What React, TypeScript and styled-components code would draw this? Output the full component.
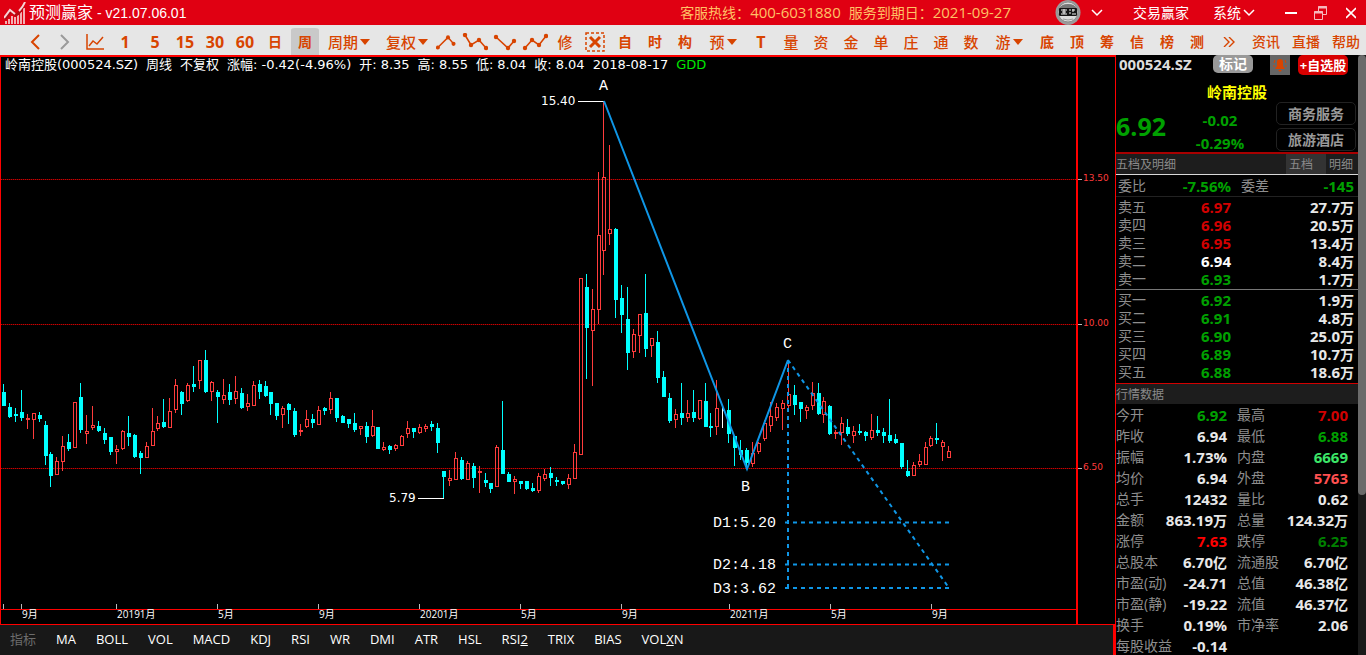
import React from "react";
import styled, { createGlobalStyle, css } from "styled-components";

const sans = '"Open Sans", "Noto Sans CJK SC", sans-serif';
const verdana = '"DejaVu Sans", "Noto Sans CJK SC", sans-serif';
const mono = '"Liberation Mono", monospace';

const c = {
  brand: "#e00012",
  orange: "#d84400",
  line: "#ff0000",
  up: "#ff3c3c",
  down: "#00ffff",
  wave: "#0f96e6",
  green: "#00a000",
  darkGreen: "#008000",
  lime: "#3ce668",
  red: "#d20000",
  hot: "#ff0000",
  coral: "#ff5050",
  value: "#e8e8e8",
  label: "#8e8e8e",
};

const Global = createGlobalStyle`
  * { box-sizing: border-box; }
  body { margin: 0; background: #000; overflow: hidden; font-family: ${sans}; }
  button { margin: 0; padding: 0; border: 0; background: none; color: inherit; font: inherit; cursor: pointer; white-space: nowrap; }
  h1, h2, p { margin: 0; font: inherit; }
`;

const Page = styled.div`
  display: flex;
  flex-direction: column;
  height: 100vh;
`;

/* ---------- title bar ---------- */
const TitleBar = styled.header`
  display: flex;
  align-items: center;
  flex: none;
  height: 25px;
  padding: 0 10px 0 4px;
  background: ${c.brand};
  color: #fff;
  font-size: 14px;
  line-height: 24px;
`;
const AppTitle = styled.h1`
  flex: 1;
  margin-left: 2px;
  font: 14px/24px "Liberation Sans", "Noto Sans CJK SC", sans-serif;
  white-space: nowrap;
`;
const AppName = styled.span`
  font-size: 16px;
`;
const Service = styled.p`
  display: flex;
  gap: 8px;
  margin-right: 44px;
  color: #ffc266;
  white-space: nowrap;
`;
const Digits = styled.span`
  font-size: 15px;
`;
const Account = styled.button`
  display: flex;
  align-items: center;
  gap: 10px;
  height: 25px;
  margin-right: 30px;
`;
const TitleButton = styled.button<{ $after?: number }>`
  display: flex;
  align-items: center;
  gap: 2px;
  height: 25px;
  margin-right: ${(p) => p.$after ?? 0}px;
`;

/* ---------- toolbar ---------- */
const Toolbar = styled.nav`
  display: flex;
  flex: none;
  height: 30px;
  padding-left: 20px;
  background: #e6e6e6;
  color: ${c.orange};
`;
const Tool = styled.button<{ $w?: number; $bold?: boolean; $active?: boolean; $muted?: boolean }>`
  display: flex;
  align-items: center;
  justify-content: center;
  flex: none;
  gap: 2px;
  width: ${(p) => p.$w ?? 30}px;
  height: 30px;
  padding-top: 4px;
  font-size: 15px;
  line-height: 24px;
  font-weight: 500;
  ${(p) => p.$muted && "color: #9a9a9a;"}
  ${(p) => p.$bold && "font-size: 14px; font-weight: 700;"}
  ${(p) =>
    p.$active &&
    css`
      background: #c9c9c9;
      background-clip: content-box;
      padding: 3px 1px 0;
      border-radius: 5px 5px 0 0;
    `}
`;
const ToolDigits = styled.span`
  font-size: 16px;
`;
const Links = styled.div`
  display: flex;
  margin-left: auto;
`;

/* ---------- main area ---------- */
const Main = styled.main`
  display: grid;
  grid-template-columns: minmax(0, 1fr) 251px;
  flex: 1;
  min-height: 0;
`;
const ChartColumn = styled.section`
  display: flex;
  flex-direction: column;
  min-height: 0;
`;
const ChartFrame = styled.div`
  position: relative;
  flex: 1;
  min-height: 0;
  border: solid ${c.line};
  border-width: 2px 0 1px 1px;
  background: #000;
`;
const ChartSvg = styled.svg`
  display: block;
  width: 100%;
  height: 100%;
`;
const Legend = styled.div`
  position: absolute;
  top: 0;
  left: 4px;
  display: flex;
  gap: 8px;
  color: #fff;
  font: 13px/16px ${verdana};
  white-space: nowrap;
`;
const LegendItem = styled.span<{ $lime?: boolean }>`
  display: flex;
  gap: 4px;
  ${(p) => p.$lime && "color: #00e600;"}
`;
const IndicatorBar = styled.nav`
  display: flex;
  align-items: center;
  flex: none;
  gap: 20px;
  height: 30px;
  padding: 0 0 2px 10px;
  border-right: 2px solid ${c.line};
  background: #181818;
  color: #fff;
  font-size: 13px;
  line-height: 28px;
`;
const IndicatorTitle = styled.span`
  width: 26px;
  color: #6c6c6c;
`;

/* ---------- quote panel ---------- */
const Side = styled.aside`
  display: flex;
  min-height: 0;
  border-left: 1px solid ${c.line};
`;
const Quote = styled.div`
  flex: 1;
  min-width: 0;
  overflow: hidden;
  background: #000;
`;
const Track = styled.div`
  flex: none;
  width: 8px;
  background: #1a1a1a;
`;
const Thumb = styled.div`
  height: 440px;
  max-height: 100%;
  border-radius: 4px;
  background: #6a6a6a;
`;
const CodeRow = styled.div`
  display: flex;
  height: 27px;
  padding: 0 10px 0 3px;
  color: #ddd;
`;
const Code = styled.span`
  flex: 1;
  font-size: 15px;
  font-weight: 700;
  line-height: 18px;
  white-space: nowrap;
`;
const MarkButton = styled.button`
  width: 40px;
  height: 18px;
  margin-right: 17px;
  border-radius: 5px;
  background: #999;
  color: #fff;
  font-size: 14px;
  font-weight: 700;
  line-height: 16px;
`;
const BellButton = styled.button`
  display: grid;
  place-items: center;
  width: 20px;
  height: 20px;
  margin-right: 8px;
  background: #666;
`;
const AddButton = styled.button`
  width: 50px;
  height: 20px;
  border-radius: 5px;
  background: #d80000;
  color: #fff;
  font-size: 13px;
  font-weight: 700;
  line-height: 20px;
`;
const StockName = styled.h2`
  height: 20px;
  color: #ffff00;
  font-size: 15px;
  font-weight: 700;
  line-height: 20px;
  text-align: center;
`;
const PriceRow = styled.div`
  display: grid;
  grid-template-columns: 48px minmax(0, 1fr) 80px;
  height: 50px;
  padding-right: 2px;
  color: ${c.green};
  font-weight: 700;
`;
const Price = styled.span`
  font-size: 25px;
  line-height: 48px;
`;
const Changes = styled.div`
  display: flex;
  flex-direction: column;
  padding-top: 7px;
  font-size: 15px;
  line-height: 23px;
  text-align: center;
`;
const Sectors = styled.div`
  display: flex;
  flex-direction: column;
  gap: 3px;
`;
const SectorButton = styled.button`
  height: 23px;
  border: 1px solid #222;
  border-radius: 5px;
  color: #999;
  font-size: 14px;
  font-weight: 700;
  line-height: 21px;
`;
const SectionHead = styled.div<{ $thick?: boolean }>`
  display: flex;
  justify-content: space-between;
  height: ${(p) => (p.$thick ? 23 : 21)}px;
  border-top: ${(p) => (p.$thick ? "2px solid #a80000" : "1px solid #d20000")};
  border-bottom: ${(p) => (p.$thick ? "1px solid #d8d8d8" : "0")};
  background: #1d1d1d;
  color: #8a8a8a;
  font-size: 12px;
  line-height: 21px;
`;
const Tab = styled.button<{ $on?: boolean }>`
  width: ${(p) => (p.$on ? 40 : 32)}px;
  height: 20px;
  padding-left: 3px;
  text-align: left;
  vertical-align: top;
  background: ${(p) => (p.$on ? "#333" : "transparent")};
`;
const Grid = styled.table<{ $row: number; $rule?: string; $top?: number }>`
  width: 100%;
  table-layout: fixed;
  border-collapse: separate;
  border-spacing: 0;
  border-bottom: ${(p) => (p.$rule ? `1px solid ${p.$rule}` : "0")};
  padding: ${(p) => p.$top ?? 1}px 0 1px;
  th,
  td {
    height: ${(p) => p.$row}px;
    padding: 0;
    line-height: 18px;
    white-space: nowrap;
  }
`;
const Label = styled.th<{ $indent?: number }>`
  padding-left: ${(p) => p.$indent ?? 0}px !important;
  color: ${c.label};
  font-size: 14px;
  font-weight: 400;
  text-align: left;
`;
const Value = styled.td<{ $color?: string; $end?: number }>`
  padding-right: ${(p) => p.$end ?? 0}px !important;
  color: ${(p) => p.$color ?? c.value};
  font-size: 15px;
  font-weight: 700;
  text-align: right;
`;
const Unit = styled.span`
  font-size: 14px;
  line-height: 14px;
`;

/* ---------- data ---------- */
type Candle = [kind: "u" | "d" | "w", high: number, top: number, bottom: number, low: number];

const candles: Candle[] = [
  ["d",384,392,406,406],["d",403,407,417,418],["d",408,414,416,422],["d",390,412,418,421],["u",414,418,420,429],
  ["u",413,413,420,439],["d",412,415,419,422],["d",421,425,456,465],["d",452,454,476,487],["u",457,461,475,475],
  ["u",436,446,462,471],["d",434,442,449,451],["u",402,402,448,448],["d",383,397,430,433],["u",415,431,434,444],
  ["u",406,425,428,430],["d",421,426,431,432],["d",428,433,440,444],["d",437,437,452,455],["u",445,449,452,464],
  ["u",430,431,449,450],["d",416,433,437,446],["d",434,435,457,458],["d",451,453,458,474],["u",442,446,458,458],
  ["u",408,431,446,446],["u",416,423,429,431],["d",399,422,427,428],["u",398,411,428,428],["u",379,385,410,413],
  ["d",391,392,404,415],["u",383,385,401,402],["d",366,384,387,392],["u",360,360,381,389],["d",350,360,392,393],
  ["u",381,382,392,401],["d",390,392,397,423],["u",379,395,400,404],["d",384,392,400,405],["u",376,391,399,404],
  ["d",388,393,408,409],["u",394,403,407,411],["u",381,385,406,406],["d",380,384,392,399],["d",381,386,396,397],
  ["d",392,392,404,415],["d",403,403,416,420],["u",406,408,415,428],["d",403,404,410,424],["d",408,411,435,437],
  ["u",424,430,432,436],["u",410,419,427,428],["d",414,419,423,428],["u",406,410,425,425],["d",407,408,411,415],
  ["u",392,398,410,414],["d",398,398,418,422],["d",415,416,423,423],["d",419,419,424,428],["d",413,423,430,432],
  ["u",426,426,429,435],["d",422,426,437,443],["u",410,426,436,437],["d",427,427,449,449],["u",442,447,450,451],
  ["d",445,446,450,454],["u",444,445,449,451],["u",435,436,446,446],["u",421,428,434,438],["d",428,428,432,438],
  ["u",424,427,433,434],["u",424,426,429,432],["d",421,424,427,431],["d",423,428,443,453],["d",471,471,477,498],
  ["u",470,478,481,486],["u",452,458,480,480],["d",457,460,479,480],["u",461,463,480,480],["d",463,466,478,488],
  ["u",466,471,473,493],["d",473,480,483,487],["d",483,483,489,493],["u",445,447,487,487],["d",401,450,474,474],
  ["d",472,474,482,482],["u",476,479,482,494],["d",481,481,484,489],["d",481,481,489,490],["d",483,488,491,492],
  ["u",473,476,491,493],["u",469,474,479,481],["d",467,473,478,486],["d",477,480,482,486],["d",481,481,484,485],
  ["u",474,478,485,489],["u",444,452,479,479],["u",278,278,455,455],["d",274,287,328,379],["u",289,309,331,386],
  ["u",172,235,310,324],["u",101,177,251,275],["u",145,229,234,245],["d",228,229,300,318],["d",285,298,315,333],
  ["d",287,319,353,370],["u",329,334,352,358],["u",314,314,336,353],["d",274,313,349,357],["u",338,338,346,357],
  ["d",331,342,378,383],["d",371,377,397,397],["d",393,398,421,423],["u",409,414,420,428],["d",383,413,418,425],
  ["u",400,413,418,422],["d",390,412,418,422],["u",400,400,419,420],["d",383,401,427,427],["d",413,426,428,437],
  ["u",380,408,427,435],["w",405,410,411,428],["d",399,410,434,443],["d",436,436,448,466],["d",440,450,455,460],
  ["d",448,450,463,469],["u",442,453,464,467],["u",442,443,452,454],["u",420,423,439,441],["u",402,416,426,432],
  ["u",403,407,418,421],["u",400,403,409,430],["u",360,394,406,408],["d",385,395,405,415],["d",402,402,409,422],
  ["u",405,407,411,419],["u",382,393,406,410],["d",383,393,414,415],["u",397,401,415,423],["d",405,406,434,435],
  ["u",430,432,434,439],["u",417,423,433,445],["d",419,427,434,436],["u",426,431,436,443],["d",424,431,433,435],
  ["d",431,432,436,441],["u",414,430,438,440],["d",416,430,433,436],["d",428,432,436,443],["d",399,435,441,443],
  ["d",434,439,443,444],["d",443,443,467,469],["d",460,471,476,477],["u",462,465,476,476],["u",454,461,465,467],
  ["u",442,447,465,465],["u",436,438,446,447],["d",423,438,440,444],["u",440,442,447,461],["u",446,451,458,458],
];

const priceTicks: [number, string][] = [[179, "13.50"], [324, "10.00"], [468, "6.50"]];
const timeTicks: [number, string][] = [
  [3, ""], [21, "9月"], [116, "20191月"], [217, "5月"], [318, "9月"], [419, "20201月"],
  [520, "5月"], [621, "9月"], [729, "20211月"], [830, "5月"], [931, "9月"],
];

const asks: [string, string, string, string][] = [
  ["卖五", "6.97", "27.7", c.red],
  ["卖四", "6.96", "20.5", c.red],
  ["卖三", "6.95", "13.4", c.red],
  ["卖二", "6.94", "8.4", "#ffffff"],
  ["卖一", "6.93", "1.7", c.green],
];
const bids: [string, string, string, string][] = [
  ["买一", "6.92", "1.9", c.green],
  ["买二", "6.91", "4.8", c.green],
  ["买三", "6.90", "25.0", c.green],
  ["买四", "6.89", "10.7", c.green],
  ["买五", "6.88", "18.6", c.green],
];

type Cell = [label: string, value: string, color?: string];
const stats: [Cell, Cell?][] = [
  [["今开", "6.92", c.green], ["最高", "7.00", c.red]],
  [["昨收", "6.94"], ["最低", "6.88", c.green]],
  [["振幅", "1.73%"], ["内盘", "6669", c.lime]],
  [["均价", "6.94"], ["外盘", "5763", c.coral]],
  [["总手", "12432"], ["量比", "0.62"]],
  [["金额", "863.19万"], ["总量", "124.32万"]],
  [["涨停", "7.63", c.hot], ["跌停", "6.25", c.darkGreen]],
  [["总股本", "6.70亿"], ["流通股", "6.70亿"]],
  [["市盈(动)", "-24.71"], ["总值", "46.38亿"]],
  [["市盈(静)", "-19.22"], ["流值", "46.37亿"]],
  [["换手", "0.19%"], ["市净率", "2.06"]],
  [["每股收益", "-0.14"]],
];

/* ---------- icons ---------- */
const Logo = () => (
  <svg width="23" height="22" viewBox="0 0 23 22" aria-hidden="true">
    <g fill="#f3aeb2">
      <rect x="1" y="19" width="2" height="3" />
      <rect x="4" y="17" width="2" height="5" />
      <rect x="7" y="14" width="2" height="8" />
      <rect x="10" y="15" width="2" height="7" />
      <rect x="13" y="13" width="2" height="9" />
      <rect x="16" y="10" width="2" height="12" />
      <rect x="19" y="6" width="2" height="16" />
    </g>
    <path d="M1 17L7 9l5 4q4-2 7-9" fill="none" stroke="#b40a14" strokeWidth="3" />
    <path d="M0 16L6 8l5 4" fill="none" stroke="#f8d4d6" strokeWidth="2" />
    <path d="M15 9Q19 5 21 0" fill="none" stroke="#f8d4d6" strokeWidth="2" />
  </svg>
);
const Avatar = () => (
  <svg width="26" height="25" viewBox="0 0 26 25" aria-hidden="true">
    <circle cx="13" cy="12.5" r="12.5" fill="#9b9b9b" />
    <circle cx="13" cy="12" r="10" fill="#dcdcdc" stroke="#8e8e8e" />
    <path d="M4 9Q6 4 13 4t9 5z" fill="#777" />
    <rect x="4" y="8" width="18" height="8" rx="1" fill="#151515" />
    <path d="M6 10h6M7 12h4M6 14h6M9 9v5M14 10h2M15 12v2M17 10h3M18 9v3M17 14h4" stroke="#f4f4f4" fill="none" />
    <path d="M8 19q5 2 10 0" stroke="#999" fill="none" />
  </svg>
);
const ChevronDown = () => (
  <svg width="12" height="8" viewBox="0 0 12 8" aria-hidden="true">
    <path d="M1 1l5 5 5-5" fill="none" stroke="#fff" strokeWidth="1.5" />
  </svg>
);
const Caret = () => (
  <svg width="10" height="7" viewBox="0 0 10 7" aria-hidden="true">
    <path d="M0 0h10L5 6z" fill="currentColor" />
  </svg>
);
const Angle = ({ d }: { d: string }) => (
  <svg width="14" height="16" viewBox="0 0 14 16" aria-hidden="true">
    <path d={d} fill="none" stroke="currentColor" strokeWidth="2" />
  </svg>
);
const Zigzag = ({ pts }: { pts: [number, number][] }) => (
  <svg width="26" height="18" viewBox="0 0 26 18" aria-hidden="true">
    <polyline points={pts.map((p) => p.join(",")).join(" ")} fill="none" stroke="currentColor" strokeWidth="1.6" />
    {pts.map(([x, y]) => (
      <circle key={x} cx={x} cy={y} r="2.2" fill="currentColor" />
    ))}
  </svg>
);

/* ---------- pieces ---------- */
const Header = () => (
  <TitleBar>
    <Logo />
    <AppTitle>
      <AppName>预测赢家</AppName> - v21.07.06.01
    </AppTitle>
    <Service>
      <span>客服热线：<Digits>400-6031880</Digits></span>
      <span>服务到期日：<Digits>2021-09-27</Digits></span>
    </Service>
    <Account aria-label="账户"><Avatar /><ChevronDown /></Account>
    <TitleButton $after={24}>交易赢家</TitleButton>
    <TitleButton $after={30}>系统<ChevronDown /></TitleButton>
    <TitleButton $after={17} aria-label="最小化">
      <svg width="12" height="12" viewBox="0 0 12 12"><path d="M0 6h12" stroke="#fff" strokeWidth="2" /></svg>
    </TitleButton>
    <TitleButton $after={19} aria-label="还原">
      <svg width="13" height="14" viewBox="0 0 13 14" fill="none" stroke="#f6b8bd">
        <path d="M4.5 5V.5h8v8H9" /><path d="M4 1.5h9" strokeWidth="2" />
        <path d="M.5 5.5h8v8h-8z" /><path d="M0 6.5h9" strokeWidth="2" />
      </svg>
    </TitleButton>
    <TitleButton aria-label="关闭">
      <svg width="10" height="12" viewBox="0 0 10 12"><path d="M0 1l10 10M10 1L0 11" stroke="#fff" strokeWidth="1.6" /></svg>
    </TitleButton>
  </TitleBar>
);

const Tools = () => (
  <Toolbar>
    <Tool aria-label="后退"><Angle d="M11 1L4 8l7 7" /></Tool>
    <Tool $muted aria-label="前进"><Angle d="M3 1l7 7-7 7" /></Tool>
    <Tool aria-label="分时图">
      <svg width="18" height="16" viewBox="0 0 18 16" fill="none" stroke="currentColor" strokeWidth="1.5">
        <path d="M1 0v15h17" /><path d="M3 12l4-5 4 3 6-7" />
      </svg>
    </Tool>
    {["1", "5", "15", "30", "60"].map((t) => (
      <Tool key={t} $bold><ToolDigits>{t}</ToolDigits></Tool>
    ))}
    <Tool $bold>日</Tool>
    <Tool $bold $active>周</Tool>
    <Tool $w={58}>周期<Caret /></Tool>
    <Tool $w={58}>复权<Caret /></Tool>
    <Tool $w={24} aria-label="三点"><Zigzag pts={[[2, 15], [13, 4], [19, 11]]} /></Tool>
    <Tool aria-label="四点"><Zigzag pts={[[3, 2], [9, 12], [17, 7], [24, 15]]} /></Tool>
    <Tool aria-label="三点反向"><Zigzag pts={[[4, 4], [16, 15], [22, 8]]} /></Tool>
    <Tool aria-label="四点反向"><Zigzag pts={[[3, 15], [10, 7], [17, 12], [24, 3]]} /></Tool>
    <Tool>修</Tool>
    <Tool aria-label="清除">
      <svg width="20" height="20" viewBox="0 0 20 20" fill="none" stroke="currentColor">
        <rect x="1" y="1" width="18" height="18" strokeWidth="1.5" strokeDasharray="3 2" />
        <path d="M5 5l10 10M15 5L5 15" strokeWidth="3" />
      </svg>
    </Tool>
    {["自", "时", "构"].map((t) => <Tool key={t} $bold>{t}</Tool>)}
    <Tool $w={46}>预<Caret /></Tool>
    <Tool $bold><ToolDigits>T</ToolDigits></Tool>
    {["量", "资", "金", "单", "庄", "通", "数"].map((t) => <Tool key={t}>{t}</Tool>)}
    <Tool $w={46}>游<Caret /></Tool>
    {["底", "顶", "筹", "信", "榜", "测"].map((t) => <Tool key={t} $bold>{t}</Tool>)}
    <Links>
      <Tool $w={34} aria-label="更多">
        <svg width="12" height="10" viewBox="0 0 12 10"><path d="M1 0l5 5-5 5M6 0l5 5-5 5" fill="none" stroke="currentColor" strokeWidth="1.4" /></svg>
      </Tool>
      {["资讯", "直播", "帮助"].map((t) => <Tool key={t} $w={40}><Unit>{t}</Unit></Tool>)}
    </Links>
  </Toolbar>
);

const CandleBar = ({ i, data: [kind, high, top, bottom, low] }: { i: number; data: Candle }) => {
  const x = Math.floor(3.4 + i * 5.946);
  if (kind === "d") {
    return (
      <g fill={c.down}>
        <rect x={x} y={high} width="1" height={low - high} />
        <rect x={x - 1} y={top} width="4" height={bottom - top} />
      </g>
    );
  }
  if (kind === "w") {
    return (
      <g fill="#fff">
        <rect x={x} y={high} width="1" height={low - high} />
        <rect x={x} y={top} width="3" height="1" />
      </g>
    );
  }
  return (
    <g fill={c.up}>
      <rect x={x} y={high} width="1" height={top - high} />
      <rect x={x} y={bottom} width="1" height={low - bottom} />
      <path fillRule="evenodd" d={`M${x - 1} ${top}h4V${bottom}h-4zM${x} ${top + 1}V${bottom - 1}h2V${top + 1}z`} />
    </g>
  );
};

const Chart = () => (
  <ChartSvg viewBox="1 57 1114 567" role="img" aria-label="岭南控股 周线">
    <g>
      {priceTicks.map(([y]) => (
        <g key={y} fill="none">
          <path d={`M1 ${y}.5H1076`} stroke="#500000" />
          <path d={`M1 ${y}.5H1076`} stroke="#c80000" strokeDasharray="1 1" />
          <path d={`M1078 ${y}.5h4`} stroke="#bbb" />
        </g>
      ))}
    </g>
    <g shapeRendering="crispEdges">
      <path d="M1 609.5H1076" stroke={c.line} />
      <path d="M1077 57V624" stroke={c.line} strokeWidth="2" />
      {timeTicks.map(([x]) => <path key={x} d={`M${x}.5 604v5`} stroke="#bbb" />)}
      {candles.map((d, i) => <CandleBar key={i} i={i} data={d} />)}
      <path d="M578 101.5h26M418 498.5h26" stroke="#fff" />
    </g>
    <g fill="none" stroke={c.wave} strokeWidth="2">
      <path d="M604 101L747 469L788 360" />
      <path strokeDasharray="4 4" d="M788 360V588M785 522.5H949M785 564.5H949M785 588H949" />
      <path strokeDasharray="4 4" d="M788 360L949 588" />
    </g>
    <g fill="#ff3c3c" fontFamily={verdana} fontSize="9">
      {priceTicks.map(([y, t]) => <text key={t} x="1083" y={y + 2}>{t}</text>)}
    </g>
    <g fill="#fff" fontFamily={sans} fontSize="10">
      {timeTicks.map(([x, t]) => <text key={x} x={x + 1} y="618">{t}</text>)}
    </g>
    <g fill="#fff" fontFamily={verdana} fontSize="12">
      <text x="541" y="105">15.40</text>
      <text x="389" y="502">5.79</text>
    </g>
    <g fill="#fff" fontFamily={mono} fontSize="15">
      <text x="599" y="90">A</text>
      <text x="741" y="491">B</text>
      <text x="783" y="348">C</text>
      <text x="713" y="527">D1:5.20</text>
      <text x="713" y="569">D2:4.18</text>
      <text x="713" y="593">D3:3.62</text>
    </g>
  </ChartSvg>
);

const prices: [string, string][] = [["开:", "8.35"], ["高:", "8.55"], ["低:", "8.04"], ["收:", "8.04"]];

const WithUnit = ({ text }: { text: string }) => {
  const unit = /[万亿]$/.test(text) ? text.slice(-1) : "";
  return <>{unit ? text.slice(0, -1) : text}{unit && <Unit>{unit}</Unit>}</>;
};

const Depth = ({ rows, rule }: { rows: typeof asks; rule: string }) => (
  <Grid $row={18} $rule={rule}>
    <colgroup><col width="46" /><col width="69" /><col /></colgroup>
    <tbody>
      {rows.map(([name, price, vol, color]) => (
        <tr key={name}>
          <Label scope="row" $indent={2}>{name}</Label>
          <Value $color={color}>{price}</Value>
          <Value $end={4}><WithUnit text={vol + "万"} /></Value>
        </tr>
      ))}
    </tbody>
  </Grid>
);

const QuotePanel = () => (
  <Side>
    <Quote>
      <CodeRow>
        <Code>000524.SZ</Code>
        <MarkButton>标记</MarkButton>
        <BellButton aria-label="预警">
          <svg width="14" height="14" viewBox="0 0 14 14" fill="#d84400">
            <path d="M7 1a3 3 0 0 1 3 3v4l2 3H2l2-3V4a3 3 0 0 1 3-3zM5 12h4l-2 2z" />
            <path d="M2 2L1 5M12 2l1 3M1 7v2M13 7v2" stroke="#d84400" />
          </svg>
        </BellButton>
        <AddButton>+自选股</AddButton>
      </CodeRow>
      <StockName>岭南控股</StockName>
      <PriceRow>
        <Price>6.92</Price>
        <Changes><span>-0.02</span><span>-0.29%</span></Changes>
        <Sectors>
          <SectorButton>商务服务</SectorButton>
          <SectorButton>旅游酒店</SectorButton>
        </Sectors>
      </PriceRow>
      <SectionHead $thick>
        <span>五档及明细</span>
        <span><Tab $on>五档</Tab><Tab>明细</Tab></span>
      </SectionHead>
      <Grid $row={19} $rule="#222">
        <colgroup><col width="46" /><col width="69" /><col width="46" /><col /></colgroup>
        <tbody>
          <tr>
            <Label scope="row" $indent={2}>委比</Label>
            <Value $color={c.green}>-7.56%</Value>
            <Label scope="row" $indent={10}>委差</Label>
            <Value $color={c.green} $end={4}>-145</Value>
          </tr>
        </tbody>
      </Grid>
      <Depth rows={asks} rule="#777" />
      <Depth rows={bids} rule="#000" />
      <SectionHead><span>行情数据</span></SectionHead>
      <Grid $row={21} $top={0}>
        <colgroup><col width="44" /><col width="67" /><col width="56" /><col /></colgroup>
        <tbody>
          {stats.map(([a, b]) => (
            <tr key={a[0]}>
              <Label scope="row">{a[0]}</Label>
              <Value $color={a[2]}><WithUnit text={a[1]} /></Value>
              {b && <Label scope="row" $indent={10}>{b[0]}</Label>}
              {b && <Value $color={b[2]} $end={10}><WithUnit text={b[1]} /></Value>}
            </tr>
          ))}
        </tbody>
      </Grid>
    </Quote>
    <Track><Thumb /></Track>
  </Side>
);

export default function App() {
  return (
    <>
      <Global />
      <Page>
        <Header />
        <Tools />
        <Main>
          <ChartColumn>
            <ChartFrame>
              <Chart />
              <Legend>
                <LegendItem>岭南控股(000524.SZ)</LegendItem>
                <LegendItem>周线</LegendItem>
                <LegendItem>不复权</LegendItem>
                <LegendItem><span>涨幅:</span>-0.42(-4.96%)</LegendItem>
                {prices.map(([k, v]) => (
                  <LegendItem key={k}><span>{k}</span>{v}</LegendItem>
                ))}
                <LegendItem>2018-08-17</LegendItem>
                <LegendItem $lime>GDD</LegendItem>
              </Legend>
            </ChartFrame>
            <IndicatorBar>
              <IndicatorTitle>指标</IndicatorTitle>
              {["MA", "BOLL", "VOL", "MACD", "KDJ", "RSI", "WR", "DMI", "ATR", "HSL"].map((t) => (
                <button key={t}>{t}</button>
              ))}
              <button>RSI<u>2</u></button>
              <button>TRIX</button>
              <button>BIAS</button>
              <button>VOL<u>X</u>N</button>
            </IndicatorBar>
          </ChartColumn>
          <QuotePanel />
        </Main>
      </Page>
    </>
  );
}
